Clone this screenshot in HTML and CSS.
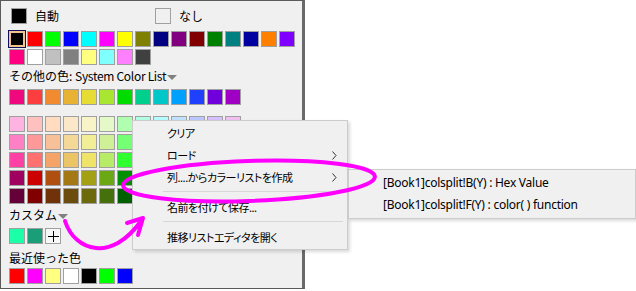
FILE: index.html
```
<!DOCTYPE html>
<html lang="ja">
<head>
  <meta charset="UTF-8" />
  <title>Color Picker</title>
  <link rel="stylesheet" href="styles.css">
</head>
<body>
  <div class="page">
    <div class="picker">
      <div class="opts">
        <div class="opt opt-auto"><span class="sw" id="autoSw"></span>自動</div>
        <div class="opt"><span class="sw sw-none"></span>なし</div>
      </div>
      <div class="basic" id="basic"></div>
      <div class="label">その他の色: <span class="latin">System Color List</span><span class="caret"></span></div>
      <div class="row" id="system"></div>
      <div class="row shades" id="shades"></div>
      <div class="label">カスタム<span class="caret"></span></div>
      <div class="row custom" id="custom"></div>
      <div class="label label-recent">最近使った色</div>
      <div class="row recent" id="recent"></div>
    </div>

    <div class="menu">
      <div class="item">クリア</div>
      <div class="item">ロード<svg class="more" width="5" height="9" viewBox="0 0 5 9"><path d="M0.5 0.5L4 4.5L0.5 8.5" /></svg></div>
      <div class="item">列....からカラーリストを作成<svg class="more" width="5" height="9" viewBox="0 0 5 9"><path d="M0.5 0.5L4 4.5L0.5 8.5" /></svg></div>
      <div class="sep"></div>
      <div class="item">名前を付けて保存...</div>
      <div class="sep"></div>
      <div class="item">推移リストエディタを開く</div>
    </div>

    <div class="submenu">
      <div class="item">[Book1]colsplit!B(Y) : Hex Value</div>
      <div class="item">[Book1]colsplit!F(Y) : color( ) function</div>
    </div>

    <svg class="marks" width="636" height="291" viewBox="0 0 636 291">
      <ellipse cx="249" cy="181" rx="126" ry="20" transform="rotate(-2 249 181)" />
      <path d="M65 221 C75 252 112 262 141 221" />
      <polyline points="127,223 143,218 138,235" />
    </svg>
  </div>

  <script>
    const basic = ['#000000', '#ff0000', '#00ff00', '#0000ff', '#00ffff', '#ff00ff', '#ffff00', '#808000',
      '#000080', '#800080', '#800000', '#008000', '#008080', '#0000a0', '#ff8000', '#8000ff',
      '#ff0080', '#ffffff', '#c0c0c0', '#808080', '#ffff80', '#80ffff', '#ff80ff', '#404040'];
    const system = ['#f0087f', '#fc3e3e', '#f28a30', '#e8b234', '#e6dc34', '#a8e632', '#00dc00',
      '#00d08c', '#00c8c8', '#00a0ff', '#2040ff', '#7000dc', '#a000c4'];
    const shades = [
      ['#ffb3e0', '#ffc0c0', '#ffdcc0', '#fbe8c8', '#f8f4c8', '#e4f8c8', '#b0ffb0', '#b0ffe4', '#b4fcff', '#c0e2ff', '#bcc6ff', '#d6c0ff', '#f0c0f2'],
      ['#ff80c4', '#ff9898', '#f8c098', '#f4d898', '#f2ee98', '#d0f098', '#74ff74', '#74ffd0', '#78ffff', '#80c8ff', '#8898ff', '#b880ff', '#e080e8'],
      ['#ff40a4', '#ff7070', '#f4a468', '#ecc468', '#f0e468', '#b8ec68', '#30ff30', '#34ffb4', '#34f4f4', '#40b0ff', '#5068ff', '#9840ff', '#d040d8'],
      ['#a00060', '#cc0000', '#b05010', '#a47814', '#a4a014', '#6ca814', '#009000', '#008c58', '#008888', '#006cb0', '#1028b0', '#4c0098', '#70008a'],
      ['#660038', '#800000', '#703208', '#6c4c0c', '#6c6a0c', '#46700c', '#006000', '#00603c', '#005c5c', '#004878', '#0c1a78', '#340068', '#4c005e']
    ];
    const custom = ['#1affa8', '#1a9e78'];
    const recent = ['#ff0000', '#ff00ff', '#ffff80', '#ffffff', '#000000', '#00ff00', '#0000ff'];

    function swatch(color) {
      const sw = document.createElement('span');
      sw.className = 'sw';
      sw.style.background = color;
      return sw;
    }

    function fill(id, colors) {
      const box = document.getElementById(id);
      colors.forEach(c => box.appendChild(swatch(c)));
      return box;
    }

    document.getElementById('autoSw').style.background = '#000000';
    fill('basic', basic).firstChild.classList.add('sel');
    fill('system', system);
    shades.forEach(row => fill('shades', row));
    fill('custom', custom);
    fill('recent', recent);

    const add = document.createElement('span');
    add.className = 'sw add';
    add.innerHTML = '<svg width="11" height="11" viewBox="0 0 11 11"><path d="M5.5 0V11M0 5.5H11" /></svg>';
    document.getElementById('custom').appendChild(add);
  </script>
</body>
</html>
```

FILE: styles.css
```
body {
  margin: 0;
  background: #fff;
  font-family: "Noto Sans CJK JP", sans-serif;
  font-size: 12px;
  color: #000;
}

.page {
  position: relative;
  width: 636px;
  height: 291px;
  overflow: hidden;
}

.picker {
  box-sizing: border-box;
  width: 305px;
  height: 289px;
  background: #f0f0f0;
  border: 1px solid #5a5a5a;
  border-right: 3px solid #6a6a6a;
  padding: 7px 0 0 8px;
}

.sw {
  box-sizing: border-box;
  display: block;
  flex: none;
  width: 16px;
  height: 16px;
  border: 1px solid #a0a0a0;
}

.sw.sel {
  border: 2px solid #f2c48a;
  box-shadow: 0 0 0 1px #10105e;
}

.sw-none { background: transparent; }

.sw.add {
  background: #f8f8f8;
  display: flex;
  align-items: center;
  justify-content: center;
}

.sw.add path {
  stroke: #000;
  stroke-width: 1;
  fill: none;
}

.opts {
  display: flex;
  align-items: center;
  height: 16px;
}

.opt {
  display: flex;
  align-items: center;
  gap: 8px;
  line-height: 16px;
}

.opt-auto { width: 146px; }
.opt-auto .sw { margin-left: 2px; }

.basic {
  display: grid;
  grid-template-columns: repeat(16, 16px);
  gap: 2px;
  margin-top: 7px;
}

.label {
  display: flex;
  align-items: center;
  height: 16px;
  line-height: 16px;
  margin-top: 3px;
  white-space: pre;
}

.label .latin { letter-spacing: -0.3px; }

.label-recent { margin-top: 6px; }

.caret {
  width: 0;
  height: 0;
  border-left: 5px solid transparent;
  border-right: 5px solid transparent;
  border-top: 5px solid #808080;
  margin: 3px 0 0 1px;
}

.row {
  display: grid;
  grid-template-columns: repeat(13, 16px);
  gap: 2px;
  margin-top: 5px;
}

.row.shades { margin-top: 11px; }
.row.recent { margin-top: 2px; }

.menu, .submenu {
  position: absolute;
  box-sizing: border-box;
  background: #f0f0f0;
  border: 1px solid #cccccc;
  box-shadow: 2px 2px 3px rgba(0,0,0,0.15);
}

.menu {
  left: 132px;
  top: 120px;
  width: 216px;
  padding: 1px 0;
  font-size: 11px;
  letter-spacing: -0.5px;
  font-feature-settings: "palt";
}

.submenu {
  left: 348px;
  top: 169px;
  width: 288px;
  padding: 2px 0;
  font-family: "Noto Sans", sans-serif;
  letter-spacing: -0.25px;
}

.item {
  position: relative;
  height: 22px;
  line-height: 22px;
  padding-left: 34px;
  white-space: nowrap;
}

.more {
  position: absolute;
  right: 10px;
  top: 7px;
}

.more path {
  fill: none;
  stroke: #333;
  stroke-width: 1;
}

.sep {
  height: 1px;
  background: #d7d7d7;
  margin: 3px 4px 4px 30px;
}

.marks {
  position: absolute;
  left: 0;
  top: 0;
  pointer-events: none;
}

.marks ellipse, .marks path, .marks polyline {
  fill: none;
  stroke: #ff00ff;
  stroke-width: 4;
  stroke-linecap: round;
  stroke-linejoin: round;
}
```
